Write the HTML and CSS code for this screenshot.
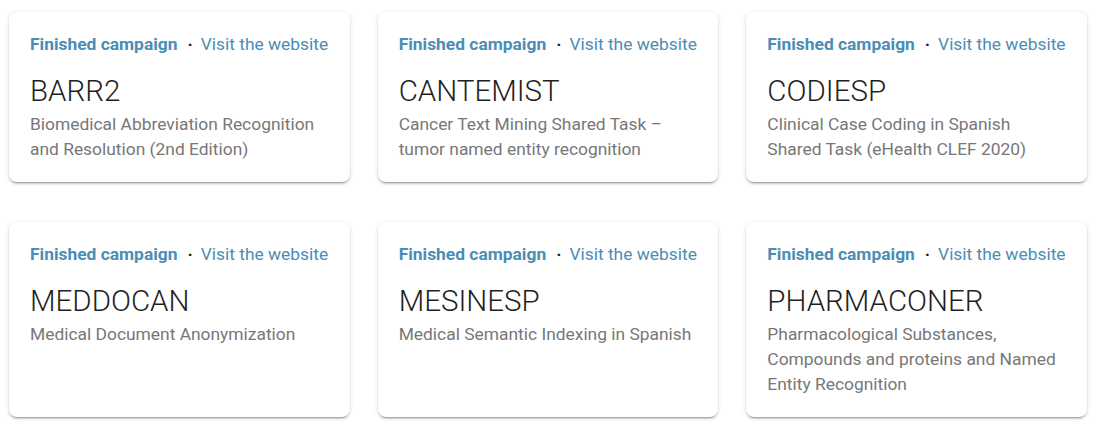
FILE: index.html
```html
<!DOCTYPE html>
<html lang="en">
<head>
<meta charset="utf-8">
<title>Campaigns</title>
<link rel="stylesheet" href="styles.css">
</head>
<body>
<main class="grid">
  <article class="card">
    <div class="meta"><span class="status">Finished campaign</span><span class="dot">·</span><a class="link" href="#">Visit the website</a></div>
    <h2 class="title">BARR2</h2>
    <p class="desc">Biomedical Abbreviation Recognition and Resolution (2nd Edition)</p>
  </article>
  <article class="card">
    <div class="meta"><span class="status">Finished campaign</span><span class="dot">·</span><a class="link" href="#">Visit the website</a></div>
    <h2 class="title">CANTEMIST</h2>
    <p class="desc">Cancer Text Mining Shared Task – tumor named entity recognition</p>
  </article>
  <article class="card">
    <div class="meta"><span class="status">Finished campaign</span><span class="dot">·</span><a class="link" href="#">Visit the website</a></div>
    <h2 class="title">CODIESP</h2>
    <p class="desc">Clinical Case Coding in Spanish Shared Task (eHealth CLEF 2020)</p>
  </article>
  <article class="card">
    <div class="meta"><span class="status">Finished campaign</span><span class="dot">·</span><a class="link" href="#">Visit the website</a></div>
    <h2 class="title">MEDDOCAN</h2>
    <p class="desc">Medical Document Anonymization</p>
  </article>
  <article class="card">
    <div class="meta"><span class="status">Finished campaign</span><span class="dot">·</span><a class="link" href="#">Visit the website</a></div>
    <h2 class="title">MESINESP</h2>
    <p class="desc">Medical Semantic Indexing in Spanish</p>
  </article>
  <article class="card">
    <div class="meta"><span class="status">Finished campaign</span><span class="dot">·</span><a class="link" href="#">Visit the website</a></div>
    <h2 class="title">PHARMACONER</h2>
    <p class="desc">Pharmacological Substances, Compounds and proteins and Named Entity Recognition</p>
  </article>
</main>
</body>
</html>
```
FILE: styles.css
```css
* { box-sizing: border-box; }
html, body { margin: 0; padding: 0; background: #ffffff; }
body {
  font-family: Roboto, "Liberation Sans", Arial, sans-serif;
  -webkit-font-smoothing: antialiased;
}
.grid {
  display: grid;
  grid-template-columns: repeat(3, 1fr);
  column-gap: 28px;
  row-gap: 40px;
  padding: 12px 16px 10px 9px;
}
.card {
  background: #fff;
  border-radius: 8px;
  box-shadow: 0 3px 1px -2px rgba(0,0,0,.2), 0 2px 2px 0 rgba(0,0,0,.14), 0 1px 5px 0 rgba(0,0,0,.12);
  padding: 20px 21px 20px 21px;
}
.meta {
  font-size: 17.4px;
  line-height: 24px;
  display: flex;
  align-items: center;
  white-space: nowrap;
}
.status {
  font-weight: 700;
  color: #4a8db5;
}
.dot {
  color: #222;
  margin: 0 8px 0 10px;
  font-weight: 700;
}
.link {
  color: #4a8db5;
  text-decoration: none;
}
.title {
  margin: 17px 0 0 0;
  font-size: 29.5px;
  line-height: 37px;
  font-weight: 300;
  color: #1f1f1f;
}
.desc {
  margin: 2px 0 0 0;
  font-size: 17.4px;
  line-height: 25px;
  color: #777777;
}
```
